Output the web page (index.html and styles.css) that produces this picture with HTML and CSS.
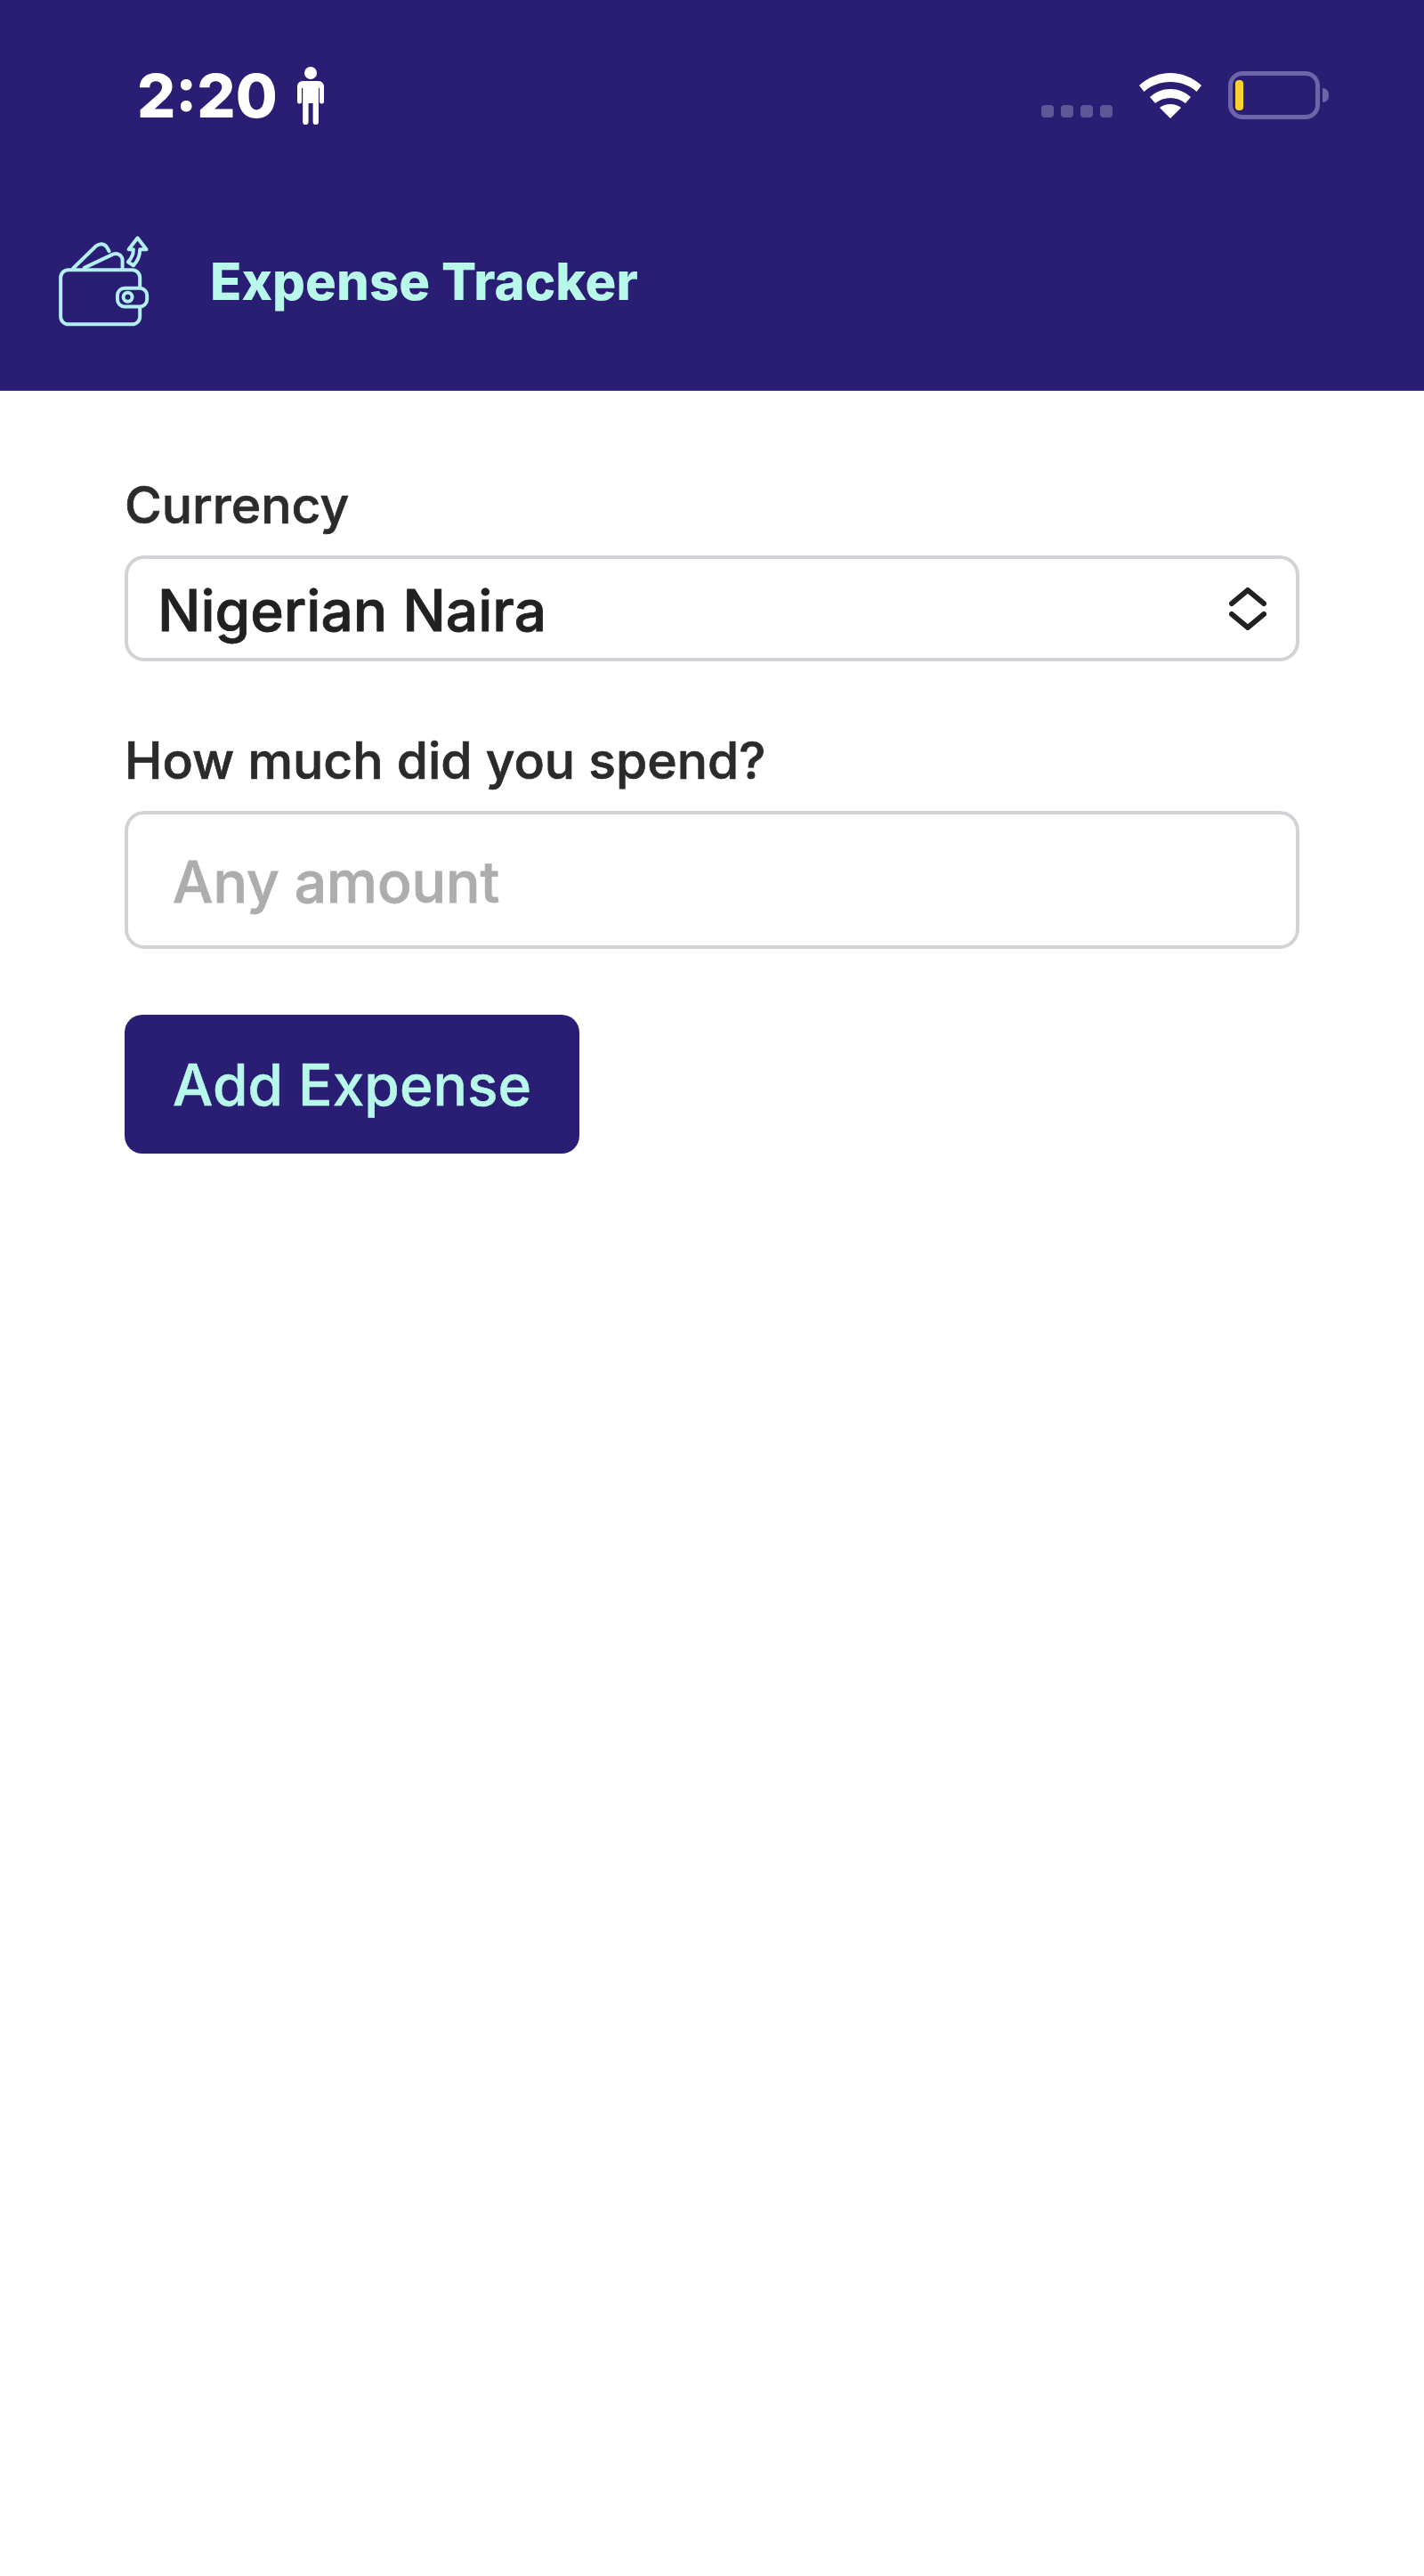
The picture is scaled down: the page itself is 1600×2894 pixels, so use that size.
FILE: index.html
```html
<!DOCTYPE html>
<html lang="en">
<head>
  <meta charset="UTF-8" />
  <meta name="viewport" content="width=device-width, initial-scale=1.0" />
  <title>Expense Tracker</title>
  <link rel="stylesheet" href="styles.css">
</head>
<body>
  <header class="header">
    <!-- Status bar -->
    <div class="status-bar">
      <div class="status-left">
        <span class="time">2:20</span>
        <svg class="person-icon" viewBox="0 0 30 65" fill="#fff">
          <circle cx="15" cy="7" r="7"/>
          <path d="M6 16h18a6 6 0 0 1 6 6v17a2.5 2.5 0 0 1-5 0V24h-1v38a3.2 3.2 0 0 1-6.400 0V41h-5v21a3.200 3.200 0 0 1-6.400 0V24H5v15a2.500 2.500 0 0 1-5 0V22a6 6 0 0 1 6-6z"/>
        </svg>
      </div>
      <div class="status-right">
        <div class="signal">
          <span class="dot"></span>
          <span class="dot"></span>
          <span class="dot"></span>
          <span class="dot"></span>
        </div>
        <svg class="wifi-icon" viewBox="0 0 70 51" fill="#fff">
          <path d="M35 0c13 0 25 5 35 14l-5.500 7C56 13.500 46 10 35 10S14 13.500 5.500 21L0 14C10 5 22 0 35 0z"/>
          <path d="M35 18c8.500 0 16 3 23 9l-6 7c-5-4-10.500-6-17-6s-12 2-17 6l-6-7c7-6 14.500-9 23-9z"/>
          <path d="M35 35c4.500 0 8.500 1.500 12 4L35 51 23 39c3.500-2.500 7.500-4 12-4z"/>
        </svg>
        <div class="battery">
          <div class="battery-body"><span class="battery-level"></span></div>
          <span class="battery-nub"></span>
        </div>
      </div>
    </div>

    <!-- App bar -->
    <div class="app-bar">
      <svg class="logo" viewBox="70 75 315 310" fill="none" stroke="#b3eff0" stroke-width="12" stroke-linejoin="round" stroke-linecap="round">
        <rect x="85" y="193" width="268" height="184" rx="26"/>
        <rect x="277" y="255" width="100" height="62" rx="24" fill="#291e74"/>
        <circle cx="312" cy="285" r="15"/>
        <path d="M127 188 205 112c12-10 28-8 36 4l8 14"/>
        <path d="M165 186 262 140c14-5 30 2 32 18v32"/>
        <path d="M345 85 315 124h16c0 18-6 30-18 42l18 12c16-16 22-32 22-54h22z"/>
      </svg>
      <h1 class="app-title">Expense Tracker</h1>
    </div>
  </header>

  <main class="content">
    <div class="field">
      <label class="field-label" for="currency">Currency</label>
      <div class="select-wrap">
        <select class="select" id="currency">
          <option>Nigerian Naira</option>
        </select>
        <svg class="select-arrows" viewBox="0 0 42 48" fill="none" stroke="#222" stroke-width="6" stroke-linecap="round" stroke-linejoin="round">
          <path d="M3 18 21 3l18 15"/>
          <path d="M3 30l18 15 18-15"/>
        </svg>
      </div>
    </div>

    <div class="field">
      <label class="field-label" for="amount">How much did you spend?</label>
      <input class="amount-input" id="amount" type="text" placeholder="Any amount">
    </div>

    <button class="submit-btn">Add Expense</button>
  </main>
</body>
</html>
```

FILE: styles.css
```css
body {
  font-family: Inter, "Noto Sans", sans-serif;
  background-color: #fff;
  margin: 0;
  min-height: 2894px;
}

.header {
  background-color: #291e74;
  height: 439px;
}

.status-bar {
  height: 214px;
  display: flex;
  align-items: center;
  justify-content: space-between;
  padding: 0 107px 0 154px;
}

.status-left {
  display: flex;
  align-items: center;
  gap: 22px;
}

.time {
  color: #fff;
  font-size: 68px;
  font-weight: 800;
  line-height: 1;
}

.person-icon {
  width: 30px;
  height: 65px;
}

.status-right {
  display: flex;
  align-items: center;
}

.signal {
  display: flex;
  gap: 8px;
  margin: 36px 30px 0 0;
}

.dot {
  width: 14px;
  height: 14px;
  border-radius: 4px;
  background: #5f5697;
}

.wifi-icon {
  width: 70px;
  height: 51px;
  margin-right: 30px;
}

.battery {
  display: flex;
  align-items: center;
  gap: 3px;
}

.battery-body {
  box-sizing: border-box;
  width: 103px;
  height: 54px;
  border: 5px solid #6e64a8;
  border-radius: 16px;
  padding: 5px 3px;
}

.battery-level {
  display: block;
  width: 9px;
  height: 34px;
  border-radius: 4px;
  background: #fbd12c;
}

.battery-nub {
  width: 7px;
  height: 16px;
  border-radius: 0 8px 8px 0;
  background: #6e64a8;
}

.app-bar {
  display: flex;
  align-items: center;
  gap: 68px;
  padding: 50px 0 0 63px;
}

.logo {
  width: 105px;
  height: 103px;
}

.app-title {
  margin: 0;
  color: #b8f8ea;
  font-size: 58px;
  font-weight: 800;
  letter-spacing: 0.1px;
}

.content {
  padding: 0 140px;
}

.field {
  margin-top: 81px;
}

.field:first-child {
  margin-top: 98px;
}

.field-label {
  display: block;
  color: #2b2b2b;
  font-size: 57px;
  font-weight: 500;
  -webkit-text-stroke: 0.7px #2b2b2b;
  line-height: 62px;
  margin-bottom: 25px;
}

.select-wrap {
  position: relative;
}

.select {
  appearance: none;
  display: block;
  box-sizing: border-box;
  width: 100%;
  height: 119px;
  padding: 4px 33px 0;
  border: 4px solid #d1d3d6;
  border-radius: 22px;
  background: #fff;
  color: #212121;
  font-family: inherit;
  font-size: 64px;
  font-weight: 500;
  -webkit-text-stroke: 0.8px #212121;
}

.select-arrows {
  position: absolute;
  top: 36px;
  right: 37px;
  width: 42px;
  height: 48px;
}

.amount-input {
  display: block;
  box-sizing: border-box;
  width: 100%;
  height: 155px;
  padding: 3px 50px 0;
  border: 4px solid #d1d3d6;
  border-radius: 22px;
  font-family: inherit;
  font-size: 64px;
  font-weight: 500;
}

.amount-input::placeholder {
  color: #adadad;
  -webkit-text-stroke: 0.8px #adadad;
  opacity: 1;
}

.submit-btn {
  display: block;
  margin-top: 74px;
  height: 156px;
  padding: 0 54px;
  border: none;
  border-radius: 20px;
  background-color: #291e74;
  color: #b8f8ea;
  font-family: inherit;
  font-size: 64px;
  font-weight: 500;
  -webkit-text-stroke: 0.5px #b8f8ea;
}
```
